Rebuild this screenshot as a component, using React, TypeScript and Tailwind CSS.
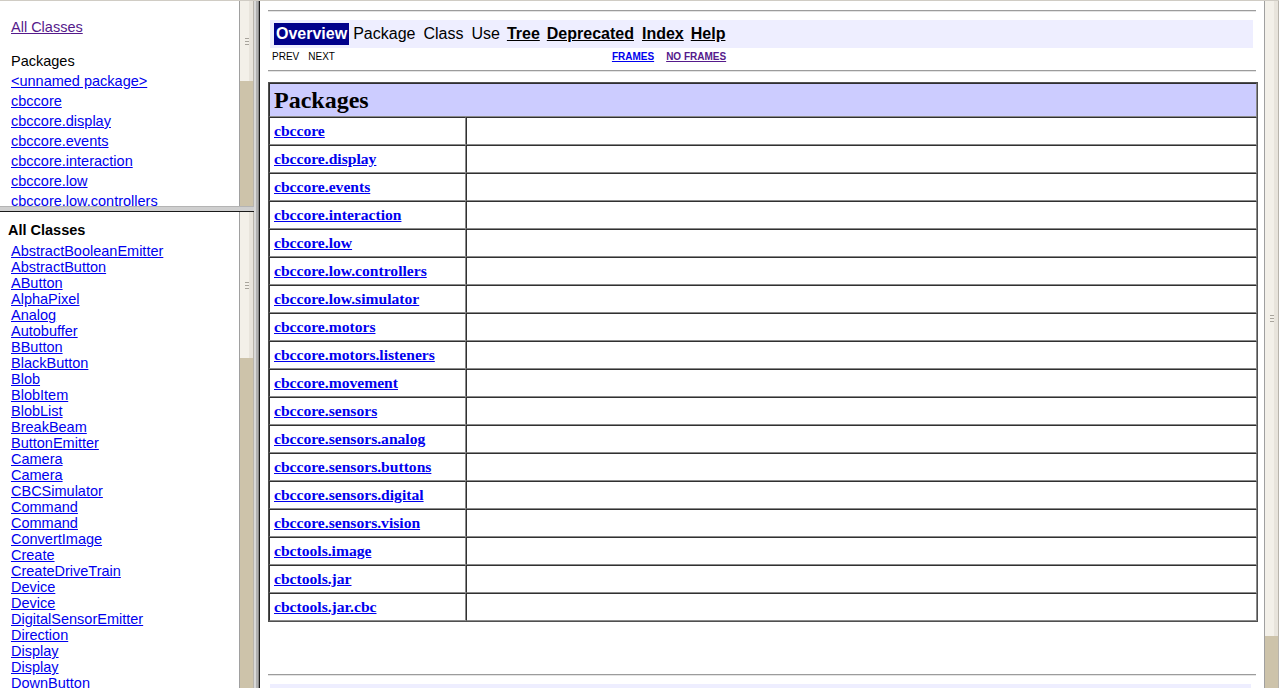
import React from "react";

const sans = { fontFamily: '"Liberation Sans", Arial, sans-serif' };
const serif = { fontFamily: '"Liberation Serif", "Times New Roman", serif' };

function Grip() {
  return (
    <div className="flex flex-col gap-[2px] w-[7px]">
      <div className="h-px bg-[#a8a49c]" />
      <div className="h-px bg-[#a8a49c]" />
      <div className="h-px bg-[#a8a49c]" />
    </div>
  );
}

function Scrollbar({ thumb }: { thumb: number }) {
  return (
    <div className="w-[15px] shrink-0 flex flex-col bg-[#cdc3aa] border-l border-[#a0a0a0] border-r border-r-[#b8b4ac]">
      <div className="flex shrink-0" style={{ height: thumb }}>
        <div className="w-[9px] bg-[#f3f0e9] flex items-center justify-end">
          <div className="-mr-[3px]">
            <Grip />
          </div>
        </div>
        <div className="flex-1 bg-[#e8e4dc]" />
      </div>
    </div>
  );
}

const packagesTop = [
  "<unnamed package>",
  "cbccore",
  "cbccore.display",
  "cbccore.events",
  "cbccore.interaction",
  "cbccore.low",
  "cbccore.low.controllers",
  "cbccore.low.simulator",
];

const classes = [
  "AbstractBooleanEmitter",
  "AbstractButton",
  "AButton",
  "AlphaPixel",
  "Analog",
  "Autobuffer",
  "BButton",
  "BlackButton",
  "Blob",
  "BlobItem",
  "BlobList",
  "BreakBeam",
  "ButtonEmitter",
  "Camera",
  "Camera",
  "CBCSimulator",
  "Command",
  "Command",
  "ConvertImage",
  "Create",
  "CreateDriveTrain",
  "Device",
  "Device",
  "DigitalSensorEmitter",
  "Direction",
  "Display",
  "Display",
  "DownButton",
  "DriveTrain",
];

const packages = [
  "cbccore",
  "cbccore.display",
  "cbccore.events",
  "cbccore.interaction",
  "cbccore.low",
  "cbccore.low.controllers",
  "cbccore.low.simulator",
  "cbccore.motors",
  "cbccore.motors.listeners",
  "cbccore.movement",
  "cbccore.sensors",
  "cbccore.sensors.analog",
  "cbccore.sensors.buttons",
  "cbccore.sensors.digital",
  "cbccore.sensors.vision",
  "cbctools.image",
  "cbctools.jar",
  "cbctools.jar.cbc",
];

function Hr() {
  return <div className="h-[2px] border-t border-[#9c9c9c] border-b border-b-[#e4e4e4]" />;
}

function NavBar() {
  return (
    <div className="bg-[#eeeeff] h-[28px] ml-[2px] mr-[5px] flex items-center pl-[4px] text-[16px]">
      <span className="bg-[#00008b] text-white font-bold h-[22px] leading-[22px] px-[2px]">Overview</span>
      <span className="ml-[4px] text-black">Package</span>
      <span className="ml-[8px] text-black">Class</span>
      <span className="ml-[8px] text-black">Use</span>
      <a className="ml-[7px] font-bold underline text-black">Tree</a>
      <a className="ml-[7px] font-bold underline text-black">Deprecated</a>
      <a className="ml-[8px] font-bold underline text-black">Index</a>
      <a className="ml-[7px] font-bold underline text-black">Help</a>
    </div>
  );
}

export default function App() {
  return (
    <div className="w-[1279px] h-[688px] overflow-hidden flex flex-col bg-white" style={sans}>
      <div className="h-px bg-[#d0ccc4] shrink-0" />
      <div className="flex flex-1 min-h-0">
        {/* left column */}
        <div className="w-[254px] shrink-0 flex flex-col">
          <div className="h-[205px] shrink-0 flex">
            <div className="flex-1 overflow-hidden pl-[11px] pt-[16px] text-[14.5px] leading-[20px]">
              <a className="underline text-[#551a8b] block">All Classes</a>
              <div className="mt-[14px] text-black">Packages</div>
              {packagesTop.map((p, i) => (
                <a key={i} className="block underline text-[#0000ee] whitespace-nowrap">
                  {p}
                </a>
              ))}
            </div>
            <Scrollbar thumb={80} />
          </div>
          <div className="h-[6px] shrink-0 bg-[#cfcfcf] border-t border-[#b4b4b4] border-b border-b-[#1a1a1a]" />
          <div className="flex-1 min-h-0 flex">
            <div className="flex-1 overflow-hidden pt-[10px] text-[14.5px] leading-[16px]">
              <div className="pl-[8px] font-bold text-black">All Classes</div>
              <div className="pl-[11px] mt-[5px]">
                {classes.map((c, i) => (
                  <a key={i} className="block underline text-[#0000ee] whitespace-nowrap">
                    {c}
                  </a>
                ))}
              </div>
            </div>
            <Scrollbar thumb={146} />
          </div>
        </div>
        {/* vertical frame border */}
        <div className="w-[6px] shrink-0 flex">
          <div className="w-[2px] bg-[#d8d8d8]" />
          <div className="w-[2px] bg-[#b0b0b0]" />
          <div className="w-px bg-[#8c8c8c]" />
          <div className="w-px bg-[#1e1e1e]" />
        </div>
        {/* right frame */}
        <div className="flex-1 min-w-0 flex">
          <div className="flex-1 min-w-0 overflow-hidden pl-[8px] pr-[6px] pt-[9px]">
            <div className="mr-[2px]">
              <Hr />
            </div>
            <div className="mt-[8px]">
              <NavBar />
            </div>
            <div className="flex h-[14px] items-center text-[10px] ml-[4px] mr-[4px] mt-[1px]">
              <span className="text-black">PREV</span>
              <span className="ml-[9px] text-black">NEXT</span>
              <a className="ml-[277px] font-bold underline text-[#0000ee]">FRAMES</a>
              <a className="ml-[12px] font-bold underline text-[#551a8b]">NO FRAMES</a>
            </div>
            <div className="mt-[7px] mr-[2px]">
              <Hr />
            </div>
            <table
              className="mt-[10px] w-full border-separate border-spacing-0 border border-[#505050]"
              style={serif}
            >
              <tbody>
                <tr>
                  <td
                    colSpan={2}
                    className="bg-[#ccccff] h-[34px] border-t border-l border-[#303030] border-b border-r border-b-[#8a8a8a] border-r-[#8a8a8a] px-[4px] text-[24px] font-bold leading-[28px] text-black"
                  >
                    Packages
                  </td>
                </tr>
                {packages.map((p, i) => (
                  <tr key={i}>
                    <td className="w-[197px] h-[28px] border-t border-l border-[#303030] border-b border-r border-b-[#8a8a8a] border-r-[#8a8a8a] px-[4px] text-[15.6px] font-bold leading-[20px] whitespace-nowrap">
                      <a className="underline text-[#0000ee]">{p}</a>
                    </td>
                    <td className="h-[28px] border-t border-l border-[#303030] border-b border-r border-b-[#8a8a8a] border-r-[#8a8a8a]">
                      &nbsp;
                    </td>
                  </tr>
                ))}
              </tbody>
            </table>
            <div className="mt-[52px] mr-[2px]">
              <Hr />
            </div>
            <div className="mt-[8px] ml-[2px] mr-[7px] h-[28px] bg-[#eeeeff]" />
          </div>
          <Scrollbar thumb={635} />
        </div>
      </div>
    </div>
  );
}
